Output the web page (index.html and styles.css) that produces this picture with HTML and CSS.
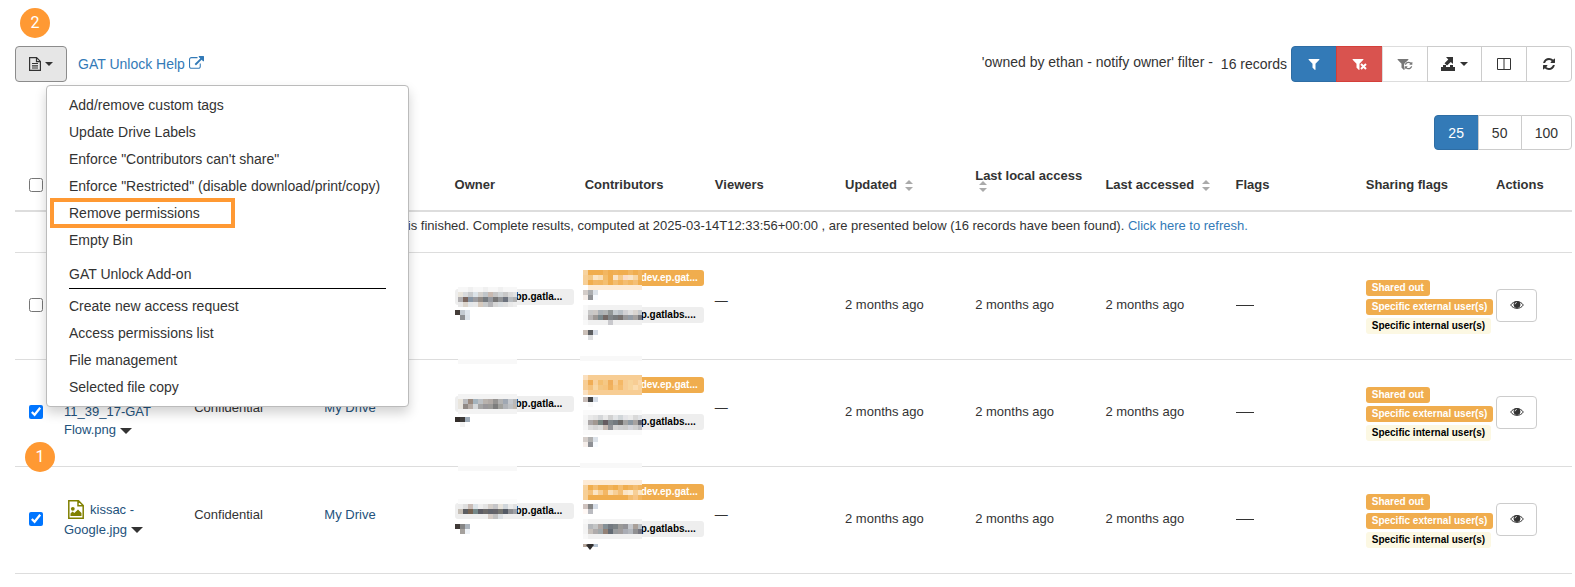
FILE: index.html
```html
<!DOCTYPE html>
<html lang="en">
<head>
<meta charset="utf-8">
<title>GAT Unlock files</title>
<link rel="stylesheet" href="styles.css">
</head>
<body>
<svg class="defs" aria-hidden="true">
  <symbol id="filter" viewBox="0 0 1792 1792"><path d="M1595 295q17 41-14 70l-493 493v742q0 42-39 59-13 5-25 5-27 0-45-19l-256-256q-19-19-19-45v-486l-493-493q-31-29-14-70 17-39 59-39h1280q42 0 59 39z"/></symbol>
  <symbol id="refresh" viewBox="0 0 1792 1792"><path d="M1639 1056q0 5-1 7-64 268-268 434.500t-478 166.500q-146 0-282.500-55t-243.500-157l-129 129q-19 19-45 19t-45-19-19-45v-448q0-26 19-45t45-19h448q26 0 45 19t19 45-19 45l-137 137q71 66 161 102t187 36q134 0 250-65t186-179q11-17 53-117 8-23 30-23h192q13 0 22.500 9.500t9.500 22.500zm25-800v448q0 26-19 45t-45 19h-448q-26 0-45-19t-19-45 19-45l138-138q-148-137-349-137-134 0-250 65t-186 179q-11 17-53 117-8 23-30 23h-199q-13 0-22.500-9.500t-9.500-22.500v-7q65-268 270-434.500t480-166.500q146 0 284 55.500t245 156.500l130-129q19-19 45-19t45 19 19 45z"/></symbol>
  <symbol id="external" viewBox="0 0 1792 1792"><path d="M1408 928v320q0 119-84.500 203.500t-203.500 84.500h-832q-119 0-203.500-84.500t-84.500-203.500v-832q0-119 84.500-203.500t203.500-84.500h704q14 0 23 9t9 23v64q0 14-9 23t-23 9h-704q-66 0-113 47t-47 113v832q0 66 47 113t113 47h832q66 0 113-47t47-113v-320q0-14 9-23t23-9h64q14 0 23 9t9 23zm384-864v512q0 26-19 45t-45 19-45-19l-176-176-652 652q-10 10-23 10t-23-10l-114-114q-10-10-10-23t10-23l652-652-176-176q-19-19-19-45t19-45 45-19h512q26 0 45 19t19 45z"/></symbol>
  <symbol id="eye" viewBox="0 0 14 10"><path fill="none" stroke="currentColor" d="M.7 5C3.500.5 10.500.5 13.300 5 10.500 9.500 3.500 9.500.7 5z"/><circle cx="7" cy="4.500" r="3.400"/><path fill="none" stroke="#fff" stroke-width=".8" d="M5 4.300A2 2 0 0 1 6.800 2.500"/></symbol>
  <symbol id="doc" viewBox="0 0 12 14"><path fill="none" stroke="currentColor" stroke-width="1.200" d="M.6.6h7l3.800 3.800v9H.6zM7.500.6v4h4M3 6.500h6M3 8.800h6M3 11h6"/></symbol>
  <symbol id="image" viewBox="0 0 16 19"><path fill="none" stroke="currentColor" stroke-width="1.500" d="M.8.8h9.700l4.700 4.700v12.700H.8zM10 .8v5h5"/><circle cx="4.800" cy="8.800" r="1.900"/><path d="M2.500 16v-2.500l2-2 1.800 1.600 3.700-3.600 3.500 3.500v3z"/></symbol>
  <symbol id="caret" viewBox="0 0 8 4"><path d="M0 0h8L4 4z"/></symbol>
  <symbol id="sort" viewBox="0 0 8 11"><path d="M4 0l4 4H0zM0 7h8l-4 4z"/></symbol>
</svg>

<main class="page">
  <header class="toolbar">
    <span class="marker marker-menu">2</span>
    <div class="toolbar-left">
      <button class="btn btn-open" type="button" aria-label="File actions"><svg class="i-doc"><use href="#doc"/></svg><svg class="i-caret"><use href="#caret"/></svg></button>
      <a class="help" href="#">GAT Unlock Help <svg class="i-ext"><use href="#external"/></svg></a>
      <ul class="menu">
        <li><a href="#">Add/remove custom tags</a></li>
        <li><a href="#">Update Drive Labels</a></li>
        <li><a href="#">Enforce "Contributors can't share"</a></li>
        <li><a href="#">Enforce "Restricted" (disable download/print/copy)</a></li>
        <li class="picked"><a href="#">Remove permissions</a></li>
        <li><a href="#">Empty Bin</a></li>
        <li class="menu-title">GAT Unlock Add-on</li>
        <li><a href="#">Create new access request</a></li>
        <li><a href="#">Access permissions list</a></li>
        <li><a href="#">File management</a></li>
        <li><a href="#">Selected file copy</a></li>
      </ul>
    </div>
    <div class="toolbar-right">
      <span class="filter-name">'owned by ethan - notify owner' filter -</span>
      <span class="count">16 records</span>
      <div class="group">
        <button class="btn primary" type="button" aria-label="Filter"><svg class="i14"><use href="#filter"/></svg></button>
        <button class="btn danger" type="button" aria-label="Clear filter"><svg class="i-combo" viewBox="0 0 16 14"><use href="#filter" width="14" height="14" x="-1"/><path fill="none" stroke="currentColor" stroke-width="2" d="M9 7l5 5M14 7l-5 5"/></svg></button>
        <button class="btn muted" type="button" aria-label="Reload filter"><svg class="i-combo" viewBox="0 0 16 14"><use href="#filter" width="14" height="14" x="-1"/><circle cx="11.500" cy="9" r="4.500" fill="#fff"/><use href="#refresh" x="7" y="4" width="9" height="9"/></svg></button>
        <button class="btn btn-export" type="button" aria-label="Export"><svg class="i14" viewBox="0 0 14 14"><path d="M0 10h14v4H0zM5 0h7v7L9.800 5 6 8.500 3.500 6.200 7.300 2.500z"/><path d="M2 8h3v2H2zM9 8h3v2H9z"/></svg><svg class="i-caret"><use href="#caret"/></svg></button>
        <button class="btn" type="button" aria-label="Columns"><svg class="i14" viewBox="0 0 14 14"><path fill="none" stroke="currentColor" d="M.5 1.500h13v11H.5zM7 1.500v11"/></svg></button>
        <button class="btn" type="button" aria-label="Refresh"><svg class="i14"><use href="#refresh"/></svg></button>
      </div>
    </div>
  </header>

  <nav class="pager group" aria-label="Page size">
    <button class="btn primary" type="button">25</button>
    <button class="btn" type="button">50</button>
    <button class="btn" type="button">100</button>
  </nav>

  <table class="files">
    <colgroup><col class="c-check"><col><col><col><col><col><col><col><col><col><col><col><col class="c-act"></colgroup>
    <thead>
      <tr>
        <th class="check"><input type="checkbox" aria-label="Select all"></th>
        <th></th><th></th><th></th>
        <th>Owner</th><th>Contributors</th><th>Viewers</th>
        <th>Updated <svg class="sort"><use href="#sort"/></svg></th>
        <th>Last local access <svg class="sort sort-over"><use href="#sort"/></svg></th>
        <th>Last accessed <svg class="sort"><use href="#sort"/></svg></th>
        <th>Flags</th><th>Sharing flags</th><th>Actions</th>
      </tr>
    </thead>
    <tbody>
      <tr class="message"><td colspan="13">The search is finished. Complete results, computed at 2025-03-14T12:33:56+00:00 , are presented below (16 records have been found). <a href="#">Click here to refresh.</a></td></tr>
      <tr>
        <td class="check"><input type="checkbox" aria-label="Select file 1"></td>
        <td></td>
        <td></td>
        <td></td>
        <td class="people"><div class="person"><span class="tag gray owner">bp.gatla...<svg class="mosaic" data-y="4" data-cells="f7f7f7 f7f7f7 f0f0f0 f7f7f7 f7f7f7 f0f0f0 f7f7f7 f7f7f7 f0f0f0 f7f7f7 f7f7f7 f7f7f7|e9e5dc d9dbdd c8cacc dce3e8 d3d0cc c0c5c9 c8b9b0 c5c5c5 d0d4d6 c8c8c8 dadada e2e2e2|b0aeb0 7c6860 8795a4 9d9da1 938c87 767b80 979aa0 777777 929497 6d737e b8bcc0 b1b1b1|e9e9e9 dcd5cc e3e6e9 e8e8e8 d5c9bd c8cacb b4b4b7 d6d6d6 d9dde0 dfdfdf e9e9e9 eeeeee"></svg></span><svg class="chip chip-owner" data-cells="443c38 c3cad1 dfe6ed|ffffff 8d8f92 dce3ea"></svg></div></td>
        <td class="people"><div class="person"><span class="tag orange">dev.ep.gat...<svg class="mosaic" data-y="6" data-cells="f7d39f f0ad4e f0ad4e f0ad4e f2b661 f0ad4e f0b056 f0ad4e f0ad4e f2b661 f0ad4e f2b45f|f7cf96 f4c783 fbe5c5 f9deb5 f3bd6b f0ad4e fae4c6 f7c986 fbdcc5 fae4c6 f8d6a4 f1b45e|f7cf96 f0ad4e f3b765 f2b661 f4bf71 f0ad4e f3bd70 f2b25a f4bd71 f2b661 f4bf76 f0ad4e|ffffff fdebd6 fdebd6 fdebd6 fdebd6 fdebd6 fdebd6 fdebd6 fdebd6 fdebd6 fdebd6 fdebd6"></svg></span><svg class="chip" data-cells="d3ccc8 abadb0 dce2e9|f5eeea 909296 f8fbff"></svg></div>
          <div class="person"><span class="tag gray">p.gatlabs....<svg class="mosaic" data-y="4" data-cells="f8f8f8 f2f2f2 f2f2f2 f2f2f2 f2f2f2 f2f2f2 f2f2f2 f2f2f2 f2f2f2 f2f2f2 f2f2f2 f2f2f2|f5f5f5 c8c8c8 ccc8c5 abb1b6 b2b5b6 929797 c5ccd0 b8bfc5 d2d2d5 dfdfdf dad5d0 c5c9cc|f3f3f3 b7b4b4 9d9895 7b888c 736966 808588 777b7d 777270 99999b 949ca5 a5a2a0 777679|f8f8f8 f0f0f0 f0f0f0 f0f0f0 f0f0f0 c8c8cc f0f0f0 f0f0f0 f0f0f0 f0f0f0 f0f0f0 f0f0f0"></svg></span><svg class="chip" data-cells="cbc0b8 5c5e61 d5dbe5|ffffff dcdddf ffffff"></svg></div></td>
        <td class="raised">—</td>
        <td>2 months ago</td><td>2 months ago</td><td>2 months ago</td>
        <td><span class="dash"></span></td>
        <td class="people"><div class="flags"><span class="flag orange">Shared out</span><span class="flag orange">Specific external user(s)</span><span class="flag cream">Specific internal user(s)</span></div></td>
        <td><button class="btn view" type="button" aria-label="View"><svg class="i-eye"><use href="#eye"/></svg></button></td>
      </tr>
      <tr class="strips">
        <td class="check"><input type="checkbox" checked aria-label="Select file 2"><span class="marker marker-row">1</span></td>
        <td><a class="dark" href="#"><br>11_39_17-GAT Flow.png</a> <svg class="i-drop"><use href="#caret"/></svg></td>
        <td class="raised">Confidential</td>
        <td class="raised"><a class="dark" href="#">My Drive</a></td>
        <td class="people"><div class="person"><span class="tag gray owner">bp.gatla...<svg class="mosaic" data-y="4" data-cells="f3f3f3 f3f3f3 f3f3f3 f3f3f3 f3f3f3 f3f3f3 f3f3f3 f3f3f3 f3f3f3 f3f3f3 f3f3f3 f3f3f3|e9e5dc babbbe 9b8b80 a5b4be bcc0c4 b8b2ad b1aaa6 959391 b2b2b2 a0a8b3 c5c8cd b9b9b9|e8e5df 908985 b4aba5 d4d7d9 a5a5a5 99979a 9b9a98 7d7d7d a1a19d b0b3b8 bfc2c5 c1b9b0|f3f3f3 f3f3f3 f3f3f3 f3f3f3 f3f3f3 f3f3f3 f3f3f3 f3f3f3 f3f3f3 f3f3f3 f3f3f3 f3f3f3"></svg></span><svg class="chip chip-owner" data-cells="332d2a 3d3b3a 9eabb8|ffffff f3f3f3 ffffff"></svg></div></td>
        <td class="people"><div class="person"><span class="tag orange">dev.ep.gat...<svg class="mosaic" data-y="4" data-cells="fae0c0 f7cd94 f7cd94 f7cd94 f7cd94 f7cd94 f7cd94 f7cd94 f7cd94 f7cd94 f7cd94 f7cd94|f7cd94 f0ad55 f8d19c f4bf70 f5c885 f0ae5b f7cd94 f4b866 f7cd94 f7d49b f7cd94 fad7a8|f7cd94 f5c27c f8d7a4 f4c783 f6c47d f1b25e f7c783 f5bd70 f7cd94 f8d49b fbdcae f9d29b|fae0c0 f7cd94 f7cd94 f7cd94 f7cd94 f7cd94 f7cd94 f7cd94 f7cd94 f7cd94 f7cd94 f7cd94"></svg></span><svg class="chip" data-cells="c8bdb8 434548 d5dce6|ffffff f8f8f8 ffffff"></svg></div>
          <div class="person"><span class="tag gray">p.gatlabs....<svg class="mosaic" data-y="2" data-cells="fafafa fafafa fafafa fafafa fafafa fafafa fafafa fafafa fafafa fafafa fafafa fafafa|f5f5f5 e9e9e9 e3e3e3 d4d6d8 e9e9e9 d1d1d1 e3e5e7 d1d6d9 e5e5e8 ebebeb d9d9d9 e1e3e6|f2f2f2 aaa6a6 a19891 768380 655c61 7f868a 737a80 6b6968 a3a3a3 8c98a2 a7a3a1 66676e|f5f5f5 dddddd d5d5d5 dedede c7bbb4 929499 d5d5d5 cecfd1 cccccc d5d6dc d0d0d0 c0c0c3|fafafa fafafa fafafa fafafa fafafa fafafa fafafa fafafa fafafa fafafa fafafa fafafa"></svg></span><svg class="chip" data-cells="d5ceca b0b0b0 dce2e9|f5eeea 8e9095 f8fbff"></svg></div></td>
        <td class="raised">—</td>
        <td>2 months ago</td><td>2 months ago</td><td>2 months ago</td>
        <td><span class="dash"></span></td>
        <td class="people"><div class="flags"><span class="flag orange">Shared out</span><span class="flag orange">Specific external user(s)</span><span class="flag cream">Specific internal user(s)</span></div></td>
        <td><button class="btn view" type="button" aria-label="View"><svg class="i-eye"><use href="#eye"/></svg></button></td>
      </tr>
      <tr class="strips">
        <td class="check"><input type="checkbox" checked aria-label="Select file 3"></td>
        <td><svg class="i-image"><use href="#image"/></svg><a class="dark" href="#">kissac - Google.jpg</a> <svg class="i-drop"><use href="#caret"/></svg></td>
        <td class="raised">Confidential</td>
        <td class="raised"><a class="dark" href="#">My Drive</a></td>
        <td class="people"><div class="person"><span class="tag gray owner">bp.gatla...<svg class="mosaic" data-y="2" data-cells="fbfbfb fbfbfb fbfbfb fbfbfb fbfbfb fbfbfb fbfbfb fbfbfb fbfbfb fbfbfb fbfbfb fbfbfb|ebebeb dedede c8bbb5 dce3e8 eeeeee e4e4e4 d5cfca c5c5c8 e8e4dd d0d6db ebebeb e1e1e1|c5beb5 5c5e62 756251 758889 5c5c64 6b6968 60636b 65646a 757570 555b66 8c8d91 a0a1a5|eeeeee eeeeee eeeeee eeeeee eeeeee eeeeee d6cdc7 c2c2c2 dce0e4 eeeeee eeeeee eeeeee"></svg></span><svg class="chip chip-owner" data-cells="403a37 858585 adb5be|ffffff a5a19d eff3f8"></svg></div></td>
        <td class="people"><div class="person"><span class="tag orange">dev.ep.gat...<svg class="mosaic" data-y="2" data-cells="fdebd6 fdebd6 fdebd6 fdebd6 fdebd6 fdebd6 fdebd6 fdebd6 fdebd6 fdebd6 fdebd6 fdebd6|f7d39f f0ad4e f4bd70 f0ad4e f0ad4e f1b45e f0ad4e f4bd70 f0ad4e f1b45e f4bd70 f1b45e|f7cf96 f5c27c fbe5c5 f7cf96 f3b765 fae0b9 f7cf96 f4bf76 fae4c6 fcebd0 f7cf96 fbe5c5|f7cf96 f0ad4e f0ad4e f0ad4e f0ad4e f0ad4e f0ad4e f0ad4e f0ad4e f4bd70 f7c585 f2b661"></svg></span><svg class="chip" data-cells="cfc3bf 858585 d5dce6|fff8f5 babbc0 ffffff"></svg></div>
          <div class="person"><span class="tag gray">p.gatlabs....<svg class="mosaic" data-y="4" data-cells="f8f8f8 f3f3f3 f3f3f3 f3f3f3 f3f3f3 f3f3f3 f3f3f3 f3f3f3 f3f3f3 f3f3f3 f3f3f3 f3f3f3|f3f3f3 b4b7bb c3c5c6 b0a8a5 859096 737980 7c8285 9b9a98 939397 c5c8cd a9a099 b9bec2|f3f3f3 c7c1bc afabab a0a8ab 938176 636b74 999c9e a19d9d aaadb5 b4b8be 909092 76767f|f8f8f8 f0f0f0 f0f0f0 f0f0f0 f0f0f0 f0f0f0 f0f0f0 f0f0f0 f0f0f0 f0f0f0 f0f0f0 f0f0f0"></svg></span><svg class="chip" viewBox="0 0 15 10"><path fill="#b5a69b" d="M0 0h5v3H0z"/><path fill="#b8c5d3" d="M10 0h5v3h-5z"/><path fill="#2f2d2d" d="M3 1l2-1h5l1 1-4 5z"/></svg></div></td>
        <td class="raised">—</td>
        <td>2 months ago</td><td>2 months ago</td><td>2 months ago</td>
        <td><span class="dash"></span></td>
        <td class="people"><div class="flags"><span class="flag orange">Shared out</span><span class="flag orange">Specific external user(s)</span><span class="flag cream">Specific internal user(s)</span></div></td>
        <td><button class="btn view" type="button" aria-label="View"><svg class="i-eye"><use href="#eye"/></svg></button></td>
      </tr>
    </tbody>
  </table>
</main>
<script src="mosaic.js"></script>
</body>
</html>
```
FILE: styles.css
```css
*, *::before, *::after { box-sizing: border-box; }
body {
  margin: 0;
  font: 13px/18px "Liberation Sans", Arial, sans-serif;
  color: #333;
  background: #fff;
}
.defs { position: absolute; width: 0; height: 0; }
svg { fill: currentColor; vertical-align: middle; }
a { color: #337ab7; text-decoration: none; }
a.dark { color: #23527c; }
.page { padding: 46px 3px 0 15px; }

.toolbar {
  position: relative;
  display: flex;
  justify-content: space-between;
  font-size: 14px;
}
.toolbar-left, .toolbar-right { display: flex; align-items: center; }
.toolbar-left { gap: 11px; position: relative; }
.filter-name { padding: 0 8px 4px 0; }
.count { padding-right: 4px; }

.btn {
  display: inline-flex;
  align-items: center;
  justify-content: center;
  height: 36px;
  min-width: 46px;
  padding: 0 12px;
  border: 1px solid #ccc;
  border-radius: 4px;
  background: #fff;
  color: #333;
  font: 14px/20px "Liberation Sans", Arial, sans-serif;
}
.btn-open { width: 52px; gap: 4px; background: #e6e6e6; border-color: #8c8c8c; }
.group { display: flex; }
.group .btn { border-radius: 0; margin-left: -1px; }
.group .btn:first-child { border-radius: 4px 0 0 4px; margin-left: 0; }
.group .btn:last-child { border-radius: 0 4px 4px 0; }
.group .primary { background: #337ab7; border-color: #2e6da4; color: #fff; }
.group .danger { background: #d9534f; border-color: #d43f3a; color: #fff; width: 47px; }
.group .muted { color: #777; border-color: #ddd; }
.group .btn-export { width: 55px; gap: 5px; }
.pager { justify-content: flex-end; padding-top: 33px; }
.pager .btn { height: 35px; min-width: 44px; }
.pager .btn:first-child { min-width: 45px; }
.pager .btn:last-child { padding: 0 13px; }

.i14 { width: 14px; height: 14px; }
.i-combo { width: 16px; height: 14px; }
.i-doc { width: 12px; height: 14px; }
.i-caret { width: 8px; height: 4px; }
.i-ext { width: 15px; height: 15px; margin-bottom: 2px; }
.i-eye { width: 14px; height: 10px; }
.i-drop { width: 12px; height: 6px; }
.i-image { width: 16px; height: 19px; margin: 0 6px 2px 4px; color: #808000; }
.sort { width: 8px; height: 11px; margin-left: 4px; color: #aaa; }
.sort-over { position: relative; top: -8px; }

.menu {
  position: absolute;
  z-index: 2;
  top: 39px;
  left: 31px;
  min-width: 363px;
  margin: 0;
  padding: 6px 0 5px;
  list-style: none;
  white-space: nowrap;
  background: #fff;
  border: 1px solid #bbb;
  border-radius: 4px;
  box-shadow: 0 6px 12px rgba(0, 0, 0, .18);
}
.menu li { position: relative; padding: 0 22px; line-height: 27px; }
.menu a { color: #333; display: block; }
.menu .menu-title { padding-top: 7px; margin-bottom: 4px; }
.menu-title::after { content: ""; display: block; height: 1px; background: #000; }
.picked::after {
  content: "";
  position: absolute;
  top: -2px;
  left: 3px;
  width: 185px;
  height: 30px;
  border: 4px solid #ff9933;
}

.marker {
  position: absolute;
  z-index: 3;
  width: 30px;
  height: 30px;
  border-radius: 50%;
  background: #ff9933;
  color: #fff;
  font: 16px/30px Roboto, sans-serif;
  text-align: center;
}
.marker-menu { left: 5px; top: -38px; }
.marker-row { left: 10px; bottom: -6px; }

.files { width: 100%; margin-top: 9px; table-layout: fixed; border-spacing: 0; }
.c-check { width: 41px; }
.c-act { width: 84px; }
th { height: 53px; padding: 0 8px; text-align: left; border-bottom: 2px solid #ddd; }
td { position: relative; height: 107px; padding: 8px 8px 10px; border-bottom: 1px solid #ddd; }
.check { padding-left: 14px; padding-right: 0; }
.check input { display: block; width: 14px; height: 14px; margin: 0; }
.message td { height: 41px; padding: 5px 8px; vertical-align: top; text-align: center; }
td.raised { padding-bottom: 18px; }
td.people { padding: 12px 0 10px 6px; }
.person { height: 37px; }
.tag {
  position: relative;
  display: block;
  width: 121px;
  height: 16px;
  padding-left: 58px;
  border-radius: 3px;
  font: bold 10px/16px "Liberation Sans", Arial, sans-serif;
}
.owner { width: 119px; margin-left: 2px; padding-left: 61px; }
.gray { background: #eee; color: #000; }
.orange { background: #f0ad4e; color: #fff; }
.cream { background: #fcf8e3; color: #000; }
.mosaic { position: absolute; left: 0; top: -6px; width: 59px; height: 30px; }
.owner .mosaic { left: 3px; }
.chip { display: block; width: 15px; height: 10px; margin-top: 4px; }
.chip-owner { margin: 5px 0 0 2px; }
.person + .person .chip { margin-top: 7px; }
.flags { display: flex; flex-direction: column; align-items: flex-start; gap: 3px; padding-left: 2px; }
.flag { padding: 0 6px; border-radius: 3px; white-space: nowrap; font: bold 10px/16px "Liberation Sans", Arial, sans-serif; }
.dash { display: block; width: 18px; height: 1px; background: #333; }
.view { height: 33px; min-width: 41px; }
.strips td:nth-child(5)::before, .strips td:nth-child(6)::before {
  content: "";
  position: absolute;
  left: 11px;
  top: -1px;
  width: 59px;
  height: 5px;
  background: #f8f8f8;
}
.strips td:nth-child(6)::before { left: 3px; top: -4px; width: 62px; }
```
FILE: mosaic.js
```js
// Fill each redaction block with 5px squares; rows are split by "|".
document.querySelectorAll("svg[data-cells]").forEach((svg) => {
  const top = Number(svg.dataset.y || 0);
  svg.dataset.cells.split("|").forEach((row, y) => {
    row.split(" ").forEach((color, x) => {
      const cell = document.createElementNS("http://www.w3.org/2000/svg", "rect");
      cell.setAttribute("x", x * 5);
      cell.setAttribute("y", top + y * 5);
      cell.setAttribute("width", 5);
      cell.setAttribute("height", 5);
      cell.setAttribute("fill", "#" + color);
      svg.appendChild(cell);
    });
  });
});
```
